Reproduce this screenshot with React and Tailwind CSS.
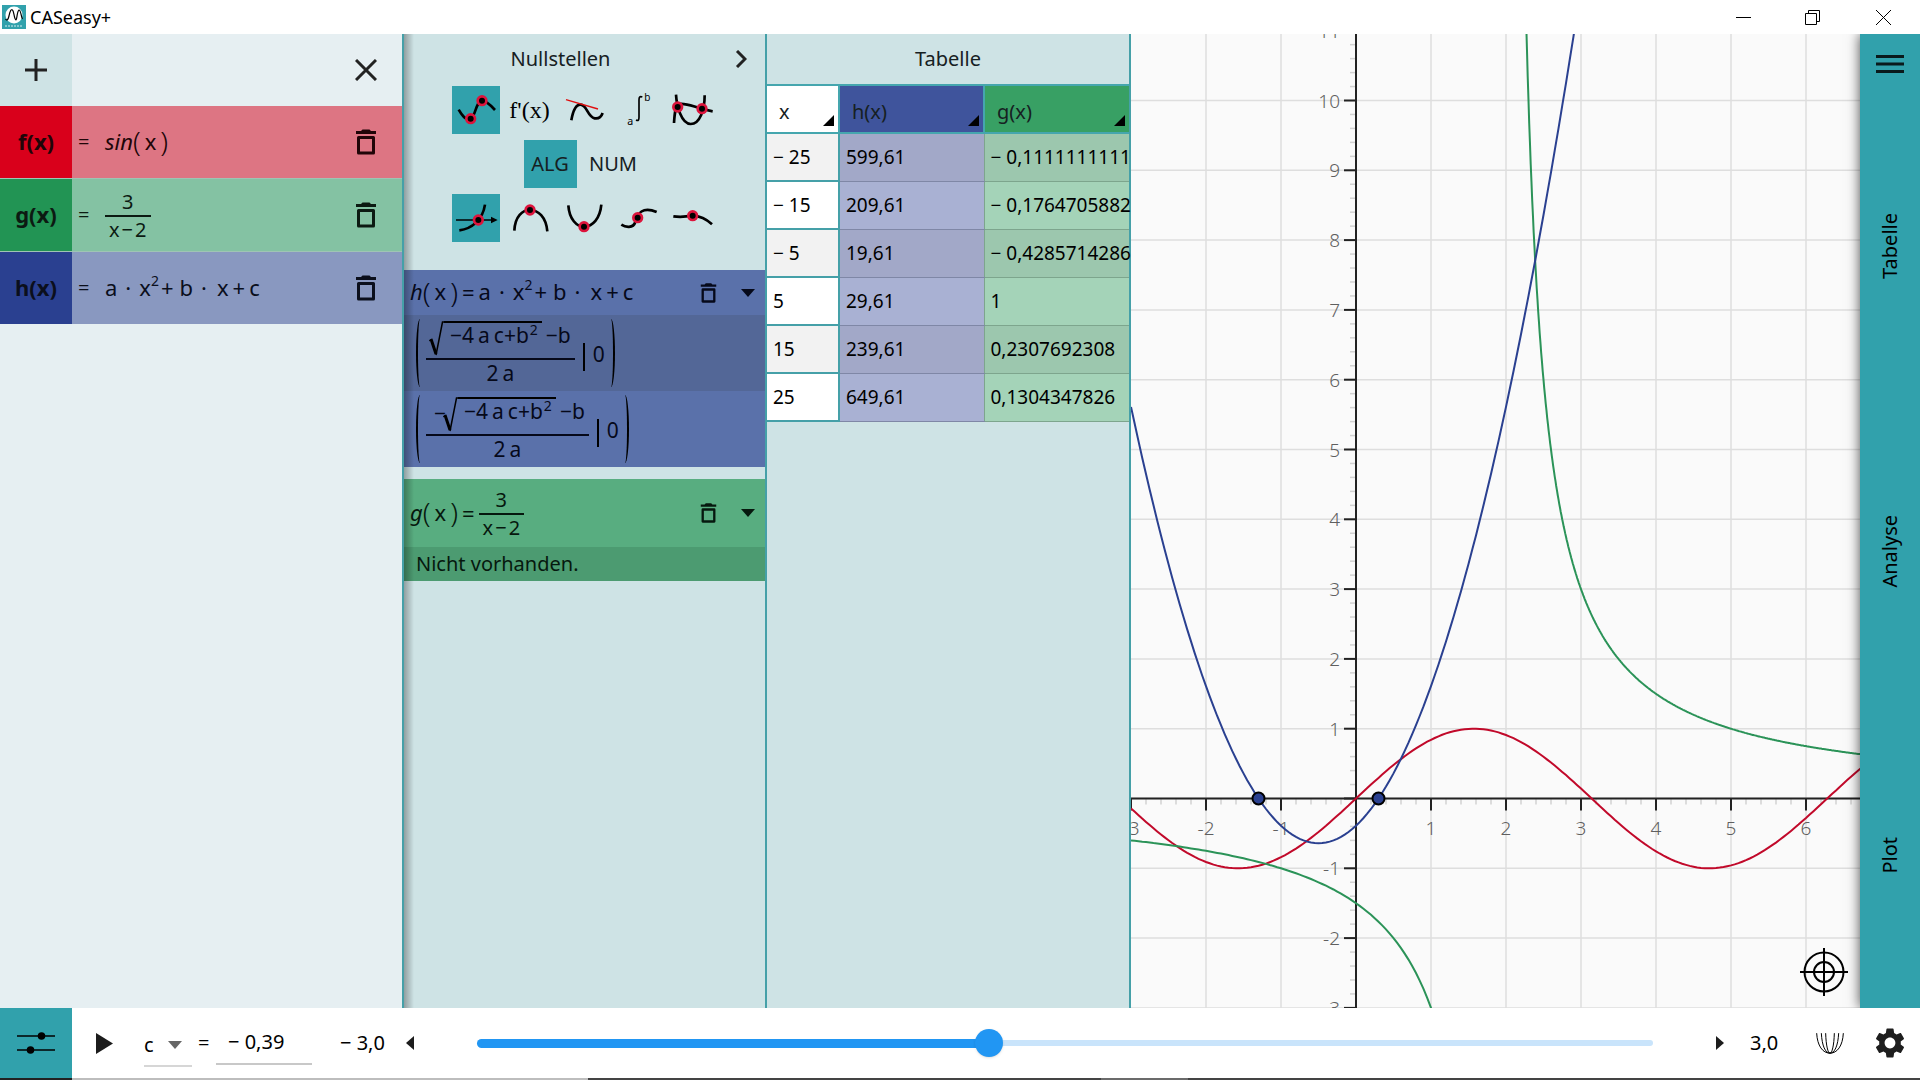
import React, { useState } from 'react';

const ORIGIN_X = 225;
const ORIGIN_Y = 764.5;
const UNIT_X = 75;
const UNIT_Y = 69.8;

const range = (from, to) => Array.from({ length: to - from + 1 }, (_, i) => from + i);

function curve(fn, from, to, step = 0.05) {
  const points = [];
  for (let x = from; x <= to + 0.001; x += step) {
    points.push(`${(ORIGIN_X + x * UNIT_X).toFixed(1)},${(ORIGIN_Y - fn(x) * UNIT_Y).toFixed(1)}`);
  }
  return points.join(' ');
}

const tableRows = [
  ['− 25', '599,61', '− 0,1111111111'],
  ['− 15', '209,61', '− 0,1764705882'],
  ['− 5', '19,61', '− 0,4285714286'],
  ['5', '29,61', '1'],
  ['15', '239,61', '0,2307692308'],
  ['25', '649,61', '0,1304347826'],
];

function TrashIcon({ className }) {
  return (
    <svg viewBox="0 0 22 28" className={className} aria-hidden="true">
      <path d="M1 3h5l1.500-1.500h7L16 3h5v3H1z" fill="currentColor" />
      <path d="M3.500 9.500h15v15.500h-15z" fill="none" stroke="currentColor" strokeWidth="3" strokeLinejoin="round" />
    </svg>
  );
}

function Dot({ x, y }) {
  return <circle cx={x} cy={y} r="13" fill="#000" stroke="#dc143c" strokeWidth="8" />;
}

function Glyph({ children }) {
  return (
    <svg viewBox="0 0 144 144" className="size-12" fill="none" stroke="#000" strokeWidth="8" aria-hidden="true">
      {children}
    </svg>
  );
}

function ToolButton({ label, active, children }) {
  return (
    <button
      aria-label={label}
      className={`flex size-12 items-center justify-center ${active ? 'bg-[#31a1ac]' : ''}`}
    >
      {children}
    </button>
  );
}

function Call({ name }) {
  return (
    <span className="flex items-center pb-0.5">
      <i>{name}</i>
      <span className="text-[28px] font-light leading-7">(</span>
      <span className="mx-1">x</span>
      <span className="text-[28px] font-light leading-7">)</span>
    </span>
  );
}

function Quadratic() {
  return (
    <span className="flex items-center pb-0.5">
      <span>a</span>
      <span className="mx-2">·</span>
      <span>
        x<sup className="-top-2.5 text-sm leading-none">2</sup>
      </span>
      <span className="mx-0.5">+</span>
      <span className="ml-1">b</span>
      <span className="mx-2">·</span>
      <span className="ml-0.5">x</span>
      <span className="mx-1">+</span>
      <span>c</span>
    </span>
  );
}

function Hyperbola() {
  return (
    <span className="flex flex-col items-center text-xl leading-[26px]">
      <span>3</span>
      <span className="flex h-[26px] gap-0.5 border-t-2 border-current px-1">
        <span>x</span>
        <span>−</span>
        <span>2</span>
      </span>
    </span>
  );
}

function Root({ negative }) {
  return (
    <span className="flex h-[76px] items-center pl-3 text-[21px]">
      <span className="h-[68px] w-2 rounded-l-[100%] border-l-2 border-black" />
      <span className="ml-0.5 flex flex-col items-center">
        <span className={`flex h-[37px] items-start px-0.5 ${negative ? 'pl-2' : ''}`}>
          {negative && <span className="-mr-1 pt-1 leading-6">−</span>}
          <svg viewBox="0 0 16 36" className="h-9 w-4" fill="none" stroke="#000" aria-hidden="true">
            <path d="M1 20l3-2" strokeWidth="1" />
            <path d="M3 18l5 15" strokeWidth="3" />
            <path d="M8 34L14.500 1H16" strokeWidth="1.500" />
          </svg>
          <span className="flex border-t-2 border-black pl-1.5 pr-1 leading-6">
            <span>−4</span>
            <span className="ml-1">a</span>
            <span className="ml-1">c</span>
            <span>
              +b<sup className="-top-2 ml-px text-sm leading-none">2</sup>
            </span>
          </span>
          <span className="ml-1 pr-0.5 pt-0.5 leading-6">−b</span>
        </span>
        <span className="flex h-7 w-full justify-center gap-1 border-t-2 border-current leading-[26px]">
          <span>2</span>
          <span>a</span>
        </span>
      </span>
      <span className="ml-2 mt-2 h-7 w-0.5 bg-black" />
      <span className="ml-2 mt-1">0</span>
      <span className="ml-0.5 h-[68px] w-2 rounded-r-[100%] border-r-2 border-black" />
    </span>
  );
}

function FunctionRow({ name, nameClass, rowClass, children }) {
  return (
    <div className={`flex h-[72px] ${rowClass}`}>
      <button className={`w-[72px] pb-0.5 text-[22px] font-bold ${nameClass}`}>{name}</button>
      <div className="flex flex-1 items-center pl-1.5 text-[22px]">
        <span className="w-[27px] text-xl">=</span>
        {children}
      </div>
      <button aria-label={`${name} löschen`} className="flex w-[72px] items-center justify-center">
        <TrashIcon className="h-7 w-[22px]" />
      </button>
    </div>
  );
}

function FunctionList() {
  return (
    <section className="w-[404px] shrink-0 border-r-2 border-[#45a0a8] bg-[#e6eff2]">
      <div className="flex h-[72px] justify-between">
        <button aria-label="Neue Funktion" className="flex w-[72px] items-center justify-center bg-[#cee3e5]">
          <svg viewBox="0 0 22 22" className="size-[22px]" stroke="#222" strokeWidth="3" aria-hidden="true">
            <path d="M11 0v22M0 11h22" />
          </svg>
        </button>
        <button aria-label="Schließen" className="flex w-[72px] items-center justify-center">
          <svg viewBox="0 0 22 22" className="size-[22px]" stroke="#222" strokeWidth="3" aria-hidden="true">
            <path d="M1 1l20 20M21 1L1 21" />
          </svg>
        </button>
      </div>
      <div className="flex flex-col gap-px bg-[#9fc4b4]">
        <FunctionRow name="f(x)" nameClass="bg-[#d9001b]" rowClass="bg-[#dd7583] text-[#200508]">
          <Call name="sin" />
        </FunctionRow>
        <FunctionRow name="g(x)" nameClass="bg-[#229454]" rowClass="bg-[#84c2a3] text-[#0c1a12]">
          <Hyperbola />
        </FunctionRow>
        <FunctionRow name="h(x)" nameClass="bg-[#2a4090]" rowClass="bg-[#8998c0] text-[#0b0f1c]">
          <Quadratic />
        </FunctionRow>
      </div>
    </section>
  );
}

function ResultHeader({ label, className, children }) {
  return (
    <div className={`flex items-center pl-1.5 text-[22px] ${className}`}>
      <div className="flex flex-1 items-center">{children}</div>
      <button aria-label={`${label} löschen`} className="p-1">
        <TrashIcon className="h-[22px] w-[17px]" />
      </button>
      <button aria-label={`${label} einklappen`} className="ml-4 mr-1.5 p-1">
        <svg viewBox="0 0 14 8" className="h-2 w-3.5" aria-hidden="true">
          <path d="M0 0h14L7 8z" fill="currentColor" />
        </svg>
      </button>
    </div>
  );
}

function Analysis() {
  return (
    <section className="w-[363px] shrink-0 border-r-2 border-[#45a0a8] text-[#162022]">
      <div className="flex h-[52px] items-center pb-0.5 pr-3.5">
        <h2 className="flex-1 pl-1.5 text-center text-xl">Nullstellen</h2>
        <button aria-label="Weiter" className="flex w-10 justify-end p-1">
          <svg viewBox="0 0 12 18" className="h-[18px] w-3" fill="none" stroke="#222" strokeWidth="3" aria-hidden="true">
            <path d="M2 1l8 8-8 8" />
          </svg>
        </button>
      </div>

      <div className="flex flex-col items-center gap-1.5 pr-0.5">
        <div className="flex gap-1.5">
          <ToolButton label="Punkte" active>
            <Glyph>
              <path d="M20 71C30 88 42 106 56 98C72 90 70 48 90 44C102 44 118 60 129 72" />
              <Dot x={56} y={98} />
              <Dot x={90} y={44} />
            </Glyph>
          </ToolButton>
          <button className="h-12 w-12 whitespace-nowrap font-['Liberation_Serif',serif] text-2xl text-black">f'(x)</button>
          <ToolButton label="Tangente">
            <Glyph>
              <path d="M34 103C38 80 46 55 62 56C82 58 82 92 104 97C116 99 124 92 128 81" />
              <path d="M18 41L114 69" stroke="#e01010" strokeWidth="4" />
            </Glyph>
          </ToolButton>
          <ToolButton label="Integral">
            <Glyph>
              <path d="M66 102c8 4 9-2 9-8V42c0-8 2-12 10-9" strokeWidth="5" />
              <text x="91" y="46" fontSize="30" fill="#000" stroke="none">b</text>
              <text x="40" y="118" fontSize="32" fill="#000" stroke="none">a</text>
            </Glyph>
          </ToolButton>
          <ToolButton label="Schnittpunkte">
            <Glyph>
              <path d="M24 26C26 60 40 114 68 114C96 114 110 70 110 28" />
              <path d="M18 111C20 80 22 58 34 54C60 50 80 66 134 76" />
              <Dot x={29} y={63} />
              <Dot x={102} y={68} />
            </Glyph>
          </ToolButton>
        </div>
        <div className="flex h-12 pl-1.5 text-xl">
          <button className="w-[53px] bg-[#31a1ac]">ALG</button>
          <button className="w-[73px]">NUM</button>
        </div>
        <div className="flex gap-1.5">
          <ToolButton label="Nullstellen" active>
            <Glyph>
              <path d="M12 78H122" strokeWidth="4" />
              <path d="M117 68L137 78L117 88z" fill="#000" stroke="none" />
              <path d="M22 109C60 104 92 78 99 32" />
              <Dot x={79} y={78} />
            </Glyph>
          </ToolButton>
          <ToolButton label="Hochpunkte">
            <Glyph>
              <path d="M25 110C27 66 50 48 72 48C96 48 120 68 124 112" />
              <Dot x={72} y={48} />
            </Glyph>
          </ToolButton>
          <ToolButton label="Tiefpunkte">
            <Glyph>
              <path d="M25 34C28 76 50 98 72 98C98 98 120 74 124 32" />
              <Dot x={72} y={98} />
            </Glyph>
          </ToolButton>
          <ToolButton label="Wendepunkte">
            <Glyph>
              <path d="M22 92C34 100 58 104 64 84C70 58 86 36 128 54" />
              <Dot x={71} y={71} />
            </Glyph>
          </ToolButton>
          <ToolButton label="Sattelpunkte">
            <Glyph>
              <path d="M16 67C36 70 56 68 74 65C100 66 116 76 132 91" />
              <Dot x={74} y={65} />
            </Glyph>
          </ToolButton>
        </div>
      </div>

      <div className="mt-7 bg-[#5a71aa] text-[#06091a]">
        <ResultHeader label="h(x)" className="h-[45px]">
          <Call name="h" />
          <span className="mx-1">=</span>
          <Quadratic />
        </ResultHeader>
        <div className="bg-[#536797]">
          <Root />
        </div>
        <Root negative />
      </div>

      <div className="mt-3 bg-[#58ad80] text-[#06180e]">
        <ResultHeader label="g(x)" className="h-[68px]">
          <Call name="g" />
          <span className="mx-1">=</span>
          <Hyperbola />
        </ResultHeader>
        <p className="bg-[#4c9b71] px-3 text-xl leading-[34px]">Nicht vorhanden.</p>
      </div>
    </section>
  );
}

function HeaderCell({ label, className }) {
  return (
    <th className={`border-2 border-[#45a6ae] p-0 text-left text-xl font-normal ${className}`}>
      <div className="flex h-[46px] items-end justify-between pr-1">
        <span className="pb-1.5 pl-3">{label}</span>
        <svg viewBox="0 0 11 11" className="mb-1.5 size-[11px]" aria-hidden="true">
          <path d="M11 0v11H0z" />
        </svg>
      </div>
    </th>
  );
}

function ValueTable() {
  return (
    <section className="w-[364px] shrink-0 border-r-2 border-[#45a0a8] bg-[#cee3e5] text-[#162022]">
      <h2 className="flex h-[50px] items-center justify-center text-xl">Tabelle</h2>
      <table className="w-full table-fixed border-collapse">
        <colgroup>
          <col className="w-[72px]" />
          <col />
          <col />
        </colgroup>
        <thead>
          <tr>
            <HeaderCell label="x" className="border-l-0 bg-white" />
            <HeaderCell label="h(x)" className="bg-[#3f549c]" />
            <HeaderCell label="g(x)" className="border-r-0 bg-[#38a064]" />
          </tr>
        </thead>
        <tbody className="text-[19px] text-black">
          {tableRows.map(([x, h, g], i) => (
            <tr key={x} className="h-12">
              <td className={`border-b-2 border-r-2 border-[#45a0a8] py-0 pl-1.5 pr-0 ${i % 2 ? 'bg-white' : 'bg-[#f2f2f2]'}`}>{x}</td>
              <td className={`border-b border-[#7f87a6] py-0 pl-1.5 pr-0 ${i % 2 ? 'bg-[#a9b1d3]' : 'bg-[#a2a8c8]'}`}>{h}</td>
              <td className={`whitespace-nowrap border-b border-l border-[#7da58d] py-0 pl-1.5 pr-0 ${i % 2 ? 'bg-[#a4d3b8]' : 'bg-[#9cc7ae]'}`}>{g}</td>
            </tr>
          ))}
        </tbody>
      </table>
    </section>
  );
}

function Plot() {
  const px = (x) => ORIGIN_X + x * UNIT_X;
  const py = (y) => ORIGIN_Y - y * UNIT_Y;

  return (
    <section className="relative min-w-0 flex-1 bg-[#fafafa]">
      <svg viewBox="0 0 729 974" preserveAspectRatio="xMinYMin slice" className="size-full" role="img" aria-label="Plot">
        <g stroke="#dedede" strokeWidth="1.5">
          {range(-2, 6).map((x) => (
            <line key={x} x1={px(x)} x2={px(x)} y1="0" y2="974" />
          ))}
          {range(-3, 10).map((y) => (
            <line key={y} x1="0" x2="729" y1={py(y)} y2={py(y)} />
          ))}
        </g>
        <g stroke="#d2d2d2" strokeWidth="1.5">
          {range(-15, 33).map((i) => (
            <line key={i} x1={px(i / 5)} x2={px(i / 5)} y1={ORIGIN_Y} y2={ORIGIN_Y + 6} />
          ))}
          {range(-15, 55).map((i) => (
            <line key={i} x1={ORIGIN_X - 6} x2={ORIGIN_X} y1={py(i / 5)} y2={py(i / 5)} />
          ))}
        </g>
        <g stroke="#222" strokeWidth="2">
          <line x1={ORIGIN_X} x2={ORIGIN_X} y1="0" y2="974" />
          <line x1="0" x2="729" y1={ORIGIN_Y} y2={ORIGIN_Y} />
          {range(-3, 6).map((x) => (
            <line key={x} x1={px(x)} x2={px(x)} y1={ORIGIN_Y} y2={ORIGIN_Y + 12} />
          ))}
          {range(-3, 10).map((y) => (
            <line key={y} x1={ORIGIN_X - 12} x2={ORIGIN_X} y1={py(y)} y2={py(y)} />
          ))}
        </g>
        <g fill="#5f5f5f" fontSize="19" fontWeight="300">
          {range(-3, 6).filter((x) => x !== 0).map((x) => (
            <text key={x} x={px(x)} y={ORIGIN_Y + 36} textAnchor="middle">{x}</text>
          ))}
          {range(-3, 11).filter((y) => y !== 0).map((y) => (
            <text key={y} x={ORIGIN_X - 16} y={py(y) + 7} textAnchor="end">{y}</text>
          ))}
        </g>
        <g fill="none" strokeWidth="2">
          <polyline stroke="#c1092a" points={curve(Math.sin, -3, 6.75)} />
          <polyline stroke="#2b9358" points={curve((x) => 3 / (x - 2), -3, 1.2)} />
          <polyline stroke="#2b9358" points={curve((x) => 3 / (x - 2), 2.2, 6.75, 0.01)} />
          <polyline stroke="#2a4090" points={curve((x) => x * x + x - 0.39, -3, 3)} />
        </g>
        <g fill="#2a4090" stroke="#000" strokeWidth="2">
          <circle cx={px(-1.3)} cy={ORIGIN_Y} r="6" />
          <circle cx={px(0.3)} cy={ORIGIN_Y} r="6" />
        </g>
      </svg>
      <button aria-label="Zentrieren" className="absolute bottom-3 right-3">
        <svg viewBox="0 0 48 48" className="size-12" fill="none" stroke="#000" strokeWidth="2" aria-hidden="true">
          <circle cx="24" cy="24" r="19.500" />
          <circle cx="24" cy="24" r="10" />
          <path d="M24 0v48M0 24h48" />
        </svg>
      </button>
    </section>
  );
}

function SideTabs() {
  return (
    <nav className="z-10 flex w-[60px] shrink-0 flex-col bg-[#31a1ac] text-xl text-black shadow-[0_0_12px_rgba(0,0,0,0.7)]">
      <button aria-label="Menü" className="flex h-[60px] items-center justify-center">
        <svg viewBox="0 0 28 18" className="h-[18px] w-7" stroke="#0a1a1c" strokeWidth="3" aria-hidden="true">
          <path d="M0 1.500h28M0 9h28M0 16.500h28" />
        </svg>
      </button>
      {['Tabelle', 'Analyse', 'Plot'].map((label) => (
        <button key={label} className="flex flex-1 items-center justify-center">
          <span className="rotate-180 [writing-mode:vertical-rl]">{label}</span>
        </button>
      ))}
    </nav>
  );
}

function TitleBar() {
  return (
    <header className="flex h-[34px] shrink-0 items-center bg-white pl-0.5 text-black">
      <svg viewBox="0 0 24 24" className="size-6" fill="none" aria-hidden="true">
        <path d="M0 0h24v24H0z" fill="#31a1ac" />
        <circle cx="12" cy="10" r="8.500" fill="#fff" />
        <path d="M3.500 14C5 16 6 15 7 11C8 6 9 4 10.500 5C12 6 12 14 14 15C15 15 15 6 17 5C19 5 19 12 20.500 14" stroke="#000" strokeWidth="1.200" />
        <path d="M3 21h18" stroke="#d8eef0" strokeDasharray="2 1" />
      </svg>
      <h1 className="ml-1 flex-1 text-lg">CASeasy+</h1>
      <div className="flex h-full">
        <button aria-label="Minimieren" className="flex w-[68px] items-center justify-center">
          <svg viewBox="0 0 15 15" className="size-[15px]" stroke="#000" aria-hidden="true">
            <path d="M0 7.500h15" />
          </svg>
        </button>
        <button aria-label="Verkleinern" className="flex w-[70px] items-center justify-center">
          <svg viewBox="0 0 15 15" className="size-[15px]" fill="none" stroke="#000" aria-hidden="true">
            <path d="M0.500 3.500h11v11h-11zM3.500 3.500v-3h11v11h-3" />
          </svg>
        </button>
        <button aria-label="Fenster schließen" className="flex w-[73px] items-center justify-center">
          <svg viewBox="0 0 15 15" className="size-[15px]" stroke="#000" aria-hidden="true">
            <path d="M0 0l15 15M15 0L0 15" />
          </svg>
        </button>
      </div>
    </header>
  );
}

function ParameterBar() {
  const [value, setValue] = useState(-0.39);
  const percent = ((value + 3) / 6) * 100;

  return (
    <footer className="flex h-[70px] shrink-0 items-center bg-white text-xl text-black">
      <button aria-label="Parameter" className="flex h-full w-[72px] items-center justify-center bg-[#31a1ac]">
        <svg viewBox="0 0 38 22" className="h-[22px] w-[38px]" fill="#000" stroke="#000" strokeWidth="1.500" aria-hidden="true">
          <path d="M0 4h38M0 18h38" />
          <circle cx="24.500" cy="4" r="3" />
          <circle cx="13.500" cy="18" r="3" />
        </svg>
      </button>
      <button aria-label="Abspielen" className="flex w-[72px] pl-6">
        <svg viewBox="0 0 17 21" className="h-[21px] w-[17px]" aria-hidden="true">
          <path d="M0 0l17 10.500L0 21z" fill="#1c1c1c" />
        </svg>
      </button>
      <div className="grid w-12 items-center">
        <select
          aria-label="Parameter wählen"
          defaultValue="c"
          className="col-start-1 row-start-1 mt-3 h-9 w-12 appearance-none border-b-2 border-[#d6d6d6] pb-2.5"
        >
          <option>a</option>
          <option>b</option>
          <option>c</option>
        </select>
        <svg viewBox="0 0 14 8" className="pointer-events-none col-start-1 row-start-1 mr-2.5 mt-1 h-2 w-3.5 justify-self-end" aria-hidden="true">
          <path d="M0 0h14L7 8z" fill="#666" />
        </svg>
      </div>
      <span className="w-6 pl-1.5">=</span>
      <input aria-label="Wert" defaultValue="− 0,39" className="h-[44px] w-24 border-b-2 border-[#c8c8c8] pb-0.5 pl-3" />
      <span className="w-[94px] pl-7">− 3,0</span>
      <button aria-label="Kleiner" className="flex w-[71px]">
        <svg viewBox="0 0 8 14" className="h-3.5 w-2" aria-hidden="true">
          <path d="M8 0v14L0 7z" fill="#1c1c1c" />
        </svg>
      </button>
      <div className="relative flex h-8 flex-1 items-center">
        <div className="absolute inset-x-0 h-1.5 rounded-full bg-[#c9e4fb]" />
        <div className="absolute left-0 h-[9px] rounded-l-full bg-[#2196f3]" style={{ width: `${percent}%` }} />
        <input
          type="range"
          aria-label="c"
          min="-3"
          max="3"
          step="0.01"
          value={value}
          onChange={(e) => setValue(Number(e.target.value))}
          className="relative -mx-3.5 flex-1 appearance-none bg-transparent [&::-webkit-slider-thumb]:size-7 [&::-webkit-slider-thumb]:appearance-none [&::-webkit-slider-thumb]:rounded-full [&::-webkit-slider-thumb]:bg-[#2196f3] [&::-webkit-slider-thumb]:shadow"
        />
      </div>
      <button aria-label="Größer" className="ml-[63px] flex w-[34px]">
        <svg viewBox="0 0 8 14" className="h-3.5 w-2" aria-hidden="true">
          <path d="M0 0v14l8-7z" fill="#1c1c1c" />
        </svg>
      </button>
      <span className="w-[66px]">3,0</span>
      <button aria-label="Kurvenschar" className="flex w-11">
        <svg viewBox="0 0 84 62" className="h-[21px] w-7" fill="none" stroke="#000" strokeWidth="3" aria-hidden="true">
          <path d="M2 0C4 38 20 60 42 60S80 38 82 0M16 0C18 38 28 60 42 60S66 38 68 0M29 0C30 38 36 60 42 60S54 38 55 0" />
        </svg>
      </button>
      <button aria-label="Einstellungen" className="flex w-[60px] justify-center">
        <svg viewBox="2 2 20 20" className="size-[30px]" fill="#1e1e1e" aria-hidden="true">
          <path d="M19.140 12.940c.04-.3.060-.610.060-.940 0-.320-.020-.640-.070-.940l2.030-1.580c.180-.140.230-.410.120-.610l-1.920-3.320c-.120-.220-.370-.290-.590-.220l-2.390.960c-.5-.380-1.030-.7-1.620-.940l-.360-2.540c-.040-.240-.240-.410-.480-.410h-3.840c-.240 0-.430.170-.470.410l-.360 2.540c-.590.240-1.130.570-1.620.940l-2.390-.960c-.220-.080-.470 0-.590.220L2.740 8.870c-.120.210-.080.470.120.610l2.030 1.580c-.050.300-.090.630-.090.940s.020.640.070.940l-2.030 1.580c-.180.140-.230.410-.120.610l1.920 3.320c.120.220.370.290.590.220l2.390-.960c.5.380 1.030.7 1.620.940l.360 2.540c.050.240.240.410.480.410h3.840c.240 0 .440-.170.470-.410l.360-2.540c.590-.240 1.130-.560 1.620-.940l2.390.960c.220.080.470 0 .590-.220l1.920-3.320c.120-.220.070-.470-.120-.610l-2.010-1.580zM12 15.600c-1.980 0-3.600-1.620-3.600-3.600s1.620-3.600 3.600-3.600 3.600 1.620 3.600 3.600-1.620 3.600-3.600 3.600z" />
        </svg>
      </button>
    </footer>
  );
}

export default function App() {
  return (
    <div className="flex h-screen flex-col overflow-hidden bg-white font-['Noto_Sans','Open_Sans',sans-serif]">
      <TitleBar />
      <main className="flex min-h-0 flex-1 overflow-hidden">
        <FunctionList />
        <div className="relative flex shrink-0 bg-[#cee3e5]">
          <Analysis />
          <div className="pointer-events-none absolute inset-y-0 left-0 w-2.5 bg-linear-to-r from-black/30 to-transparent" />
        </div>
        <ValueTable />
        <Plot />
        <SideTabs />
      </main>
      <ParameterBar />
      <div className="flex h-0.5 shrink-0 bg-[#444]">
        <span className="w-[72px] bg-[#222]" />
        <span className="w-[516px] bg-[#bdbdbd]" />
        <span className="ml-[513px] w-[87px] bg-[#6b6b6b]" />
      </div>
    </div>
  );
}
